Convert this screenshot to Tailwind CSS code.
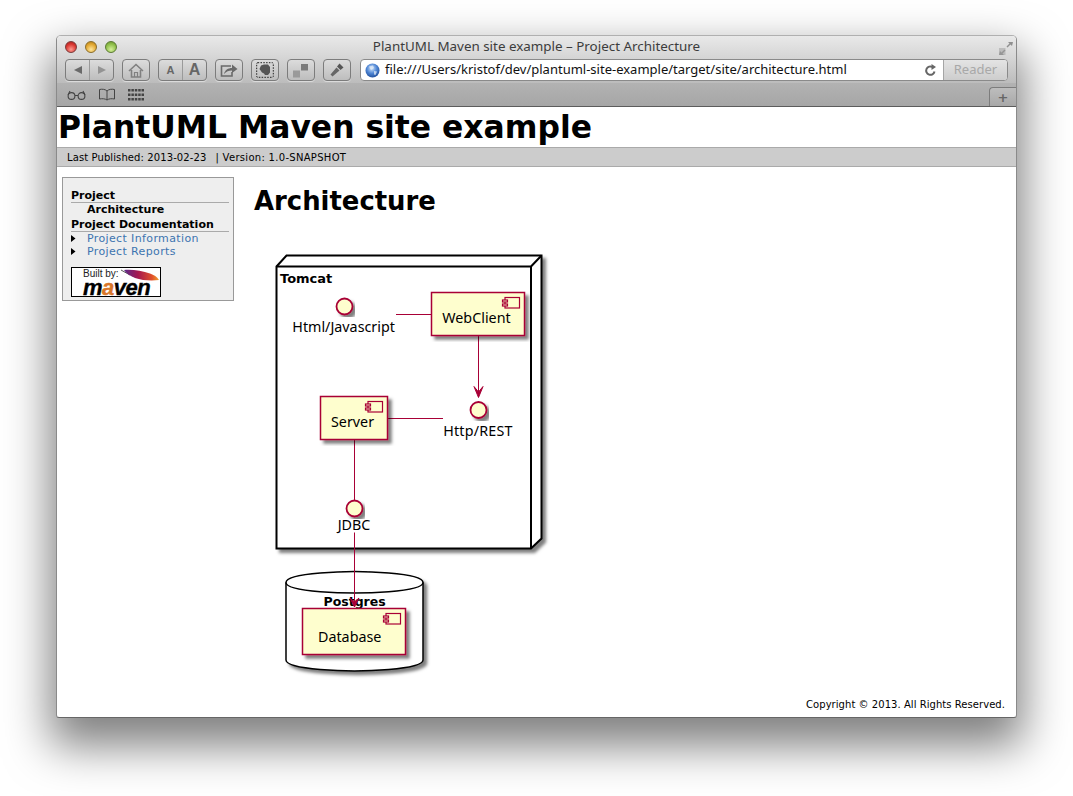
<!DOCTYPE html>
<html lang="en">
<head>
<meta charset="utf-8" />
<title>PlantUML Maven site example - Project Architecture</title>
<script src="https://cdn.jsdelivr.net/npm/@tailwindcss/browser@4"></script>
</head>
<body class="bg-white h-[796px] overflow-hidden font-['DejaVu_Sans',sans-serif]">
<div class="ml-[56px] mt-[35px] w-[961px] h-[683px] flex flex-col border border-[#8a8a8a] border-t-[#b0b0b0] border-b-[#666] rounded-t-[5px] rounded-b-[3px] overflow-hidden bg-white shadow-[0_22px_45px_6px_rgba(0,0,0,0.5)]">

  <!-- Title bar -->
  <div class="h-[21px] flex items-center relative bg-linear-to-b from-[#e9e9e9] to-[#d6d6d6]">
    <div class="flex gap-[8px] ml-[8px]">
      <span class="w-[12px] h-[12px] rounded-full border border-[#7a3a3a] bg-[radial-gradient(circle_at_50%_75%,#ff9a90,#d8352f_60%,#a02020)]"></span>
      <span class="w-[12px] h-[12px] rounded-full border border-[#8a6d2a] bg-[radial-gradient(circle_at_50%_75%,#ffe69a,#e0a52f_60%,#a87a18)]"></span>
      <span class="w-[12px] h-[12px] rounded-full border border-[#5b7a33] bg-[radial-gradient(circle_at_50%_75%,#d5f09a,#8fbf4a_60%,#66902c)]"></span>
    </div>
    <div class="absolute left-0 right-0 text-center text-[13.4px] text-[#3c3c3c] font-['Noto_Sans',sans-serif]">PlantUML Maven site example – Project Architecture</div>
    <svg class="ml-auto mr-[3px] mt-[3px]" width="15" height="15" viewBox="0 0 15 15">
      <path d="M15 1H10L11.5 2.5L8.5 5.5L9.5 6.5L12.5 3.5L14 5Z" fill="#8f8f8f"/>
      <path d="M1 14H6L4.5 12.5L7.5 9.5L6.5 8.5L3.5 11.5L2 10Z" fill="#8f8f8f"/>
      <path d="M1 7H7.5V14H1Z" fill="#9c9c9c" opacity=".5"/>
    </svg>
  </div>

  <!-- Toolbar -->
  <div class="h-[26px] flex items-center pl-[8px] bg-linear-to-b from-[#d6d6d6] to-[#bcbcbc]">
    <div class="w-[49px] h-[22px] flex rounded-[4px] border border-[#7c7c7c] bg-linear-to-b from-[#dcdcdc] to-[#bdbdbd] shadow-[0_1px_0_rgba(255,255,255,0.45)]">
      <div class="flex-1 flex items-center justify-center border-r border-[#9a9a9a]">
        <svg width="10" height="10" viewBox="0 0 10 10"><path d="M9 1V9L1 5Z" fill="#6a6a6a"/></svg>
      </div>
      <div class="flex-1 flex items-center justify-center">
        <svg width="10" height="10" viewBox="0 0 10 10"><path d="M1 1V9L9 5Z" fill="#939393"/></svg>
      </div>
    </div>
    <div class="ml-[8px] w-[28px] h-[22px] flex items-center justify-center rounded-[4px] border border-[#7c7c7c] bg-linear-to-b from-[#dcdcdc] to-[#bdbdbd] shadow-[0_1px_0_rgba(255,255,255,0.45)]">
      <svg width="16" height="15" viewBox="0 0 16 15"><path d="M1 8L8 1.5L15 8M3.5 7V14H12.5V7" fill="none" stroke="#808080" stroke-width="1.6"/><path d="M6.5 14V9.5H9.5V14" fill="none" stroke="#808080" stroke-width="1.2"/></svg>
    </div>
    <div class="ml-[8px] w-[49px] h-[22px] flex rounded-[4px] border border-[#7c7c7c] bg-linear-to-b from-[#dcdcdc] to-[#bdbdbd] shadow-[0_1px_0_rgba(255,255,255,0.45)] font-['Liberation_Sans',sans-serif] font-bold text-[#666]">
      <div class="w-[24px] flex items-center justify-center border-r border-[#9a9a9a] text-[11px]">A</div>
      <div class="flex-1 flex items-center justify-center text-[16px]">A</div>
    </div>
    <div class="ml-[8px] w-[28px] h-[22px] flex items-center justify-center rounded-[4px] border border-[#7c7c7c] bg-linear-to-b from-[#dcdcdc] to-[#bdbdbd] shadow-[0_1px_0_rgba(255,255,255,0.45)]">
      <svg width="18" height="14" viewBox="0 0 18 14"><path d="M11 3H1.5V13H12V9" fill="none" stroke="#6a6a6a" stroke-width="1.6"/><path d="M4 11C5 7 8 5 12 5V1.5L17.5 6L12 10V7.5C9 7.5 6 8.5 4 11Z" fill="#6a6a6a"/></svg>
    </div>
    <div class="ml-[8px] w-[28px] h-[22px] flex items-center justify-center rounded-[4px] border border-[#7c7c7c] bg-linear-to-b from-[#dcdcdc] to-[#bdbdbd] shadow-[0_1px_0_rgba(255,255,255,0.45)]">
      <svg width="18" height="16" viewBox="0 0 18 16"><rect x=".7" y=".7" width="16.6" height="14.6" rx="1" fill="none" stroke="#222" stroke-dasharray="1.5 1.3"/><path d="M5 3.5L8 2.5H12L14 5V10.5L12 13H9L8 11.5L6 10.5L3.5 7Z" fill="#555"/></svg>
    </div>
    <div class="ml-[8px] w-[28px] h-[22px] flex items-center justify-center rounded-[4px] border border-[#7c7c7c] bg-linear-to-b from-[#dcdcdc] to-[#bdbdbd] shadow-[0_1px_0_rgba(255,255,255,0.45)]">
      <svg width="18" height="15" viewBox="0 0 18 15"><rect x="1" y="7.5" width="7" height="7" fill="#9a9a9a"/><rect x="9" y="1" width="7" height="6.5" fill="#7a7a7a"/></svg>
    </div>
    <div class="ml-[8px] w-[28px] h-[22px] flex items-center justify-center rounded-[4px] border border-[#7c7c7c] bg-linear-to-b from-[#dcdcdc] to-[#bdbdbd] shadow-[0_1px_0_rgba(255,255,255,0.45)]">
      <svg width="16" height="16" viewBox="0 0 16 16"><path d="M1.5 12.5L7.5 5.5L10.5 8.5L3.5 14.5Z" fill="#666"/><path d="M8 4.5L10.5 1.5L14.5 5.5L11.5 8Z" fill="#555"/></svg>
    </div>
    <div class="ml-[9px] w-[648px] h-[22px] flex items-center rounded-[4px] border border-[#8a8a8a] bg-white overflow-hidden">
      <svg class="ml-[4px]" width="15" height="15" viewBox="0 0 15 15">
        <defs><radialGradient id="globe" cx="45%" cy="35%" r="65%"><stop offset="0" stop-color="#cfe3fb"/><stop offset=".55" stop-color="#4f86d4"/><stop offset="1" stop-color="#23519e"/></radialGradient></defs>
        <circle cx="7.5" cy="7.5" r="7" fill="url(#globe)"/>
        <path d="M4 3.5L8 2.5L9 5L6 7L5 5.5ZM9 8L12 8.5L10.5 12L9 11.5Z" fill="#e4ecf6" opacity=".75"/>
      </svg>
      <span class="ml-[5px] text-[13px] text-[#111] font-['Noto_Sans',sans-serif] whitespace-nowrap">file:///Users/kristof/dev/plantuml-site-example/target/site/architecture.html</span>
      <svg class="ml-auto mr-[6px]" width="13" height="13" viewBox="0 0 13 13"><path d="M10.5 7.5A4.2 4.2 0 1 1 8.5 3" fill="none" stroke="#666" stroke-width="2"/><path d="M7.5 0L12 3L7.5 6Z" fill="#666"/></svg>
      <div class="w-[64px] h-full flex items-center justify-center border-l border-[#a5a5a5] bg-linear-to-b from-[#e4e4e4] to-[#cdcdcd] text-[13px] text-[#a8a8a8] font-['Noto_Sans',sans-serif]">Reader</div>
    </div>
  </div>

  <!-- Bookmarks bar -->
  <div class="h-[24px] flex items-center pl-[10px] relative bg-linear-to-b from-[#b2b2b2] to-[#a6a6a6] border-b border-[#5c5c5c]">
    <svg width="19" height="10" viewBox="0 0 19 10"><circle cx="4.5" cy="6" r="3.4" fill="none" stroke="#444" stroke-width="1.1"/><circle cx="14.5" cy="6" r="3.4" fill="none" stroke="#444" stroke-width="1.1"/><path d="M8 5.5H11M1 5L3 1M18 5L16 1" fill="none" stroke="#444" stroke-width="1.1"/></svg>
    <svg class="ml-[12px]" width="18" height="13" viewBox="0 0 18 13"><path d="M9 3C7 1 4 1 1.5 1.5V11C4 10.5 7 10.5 9 12C11 10.5 14 10.5 16.5 11V1.5C14 1 11 1 9 3ZM9 3V12" fill="none" stroke="#444" stroke-width="1"/></svg>
    <svg class="ml-[12px]" width="16" height="12" viewBox="0 0 16 12" fill="#444">
      <path d="M0 0h2.5v2.5H0zM3.4 0h2.5v2.5H3.4zM6.8 0h2.5v2.5H6.8zM10.2 0h2.5v2.5h-2.5zM13.5 0h2.5v2.5h-2.5zM0 4.5h2.5V7H0zM3.4 4.5h2.5V7H3.4zM6.8 4.5h2.5V7H6.8zM10.2 4.5h2.5V7h-2.5zM13.5 4.5h2.5V7h-2.5zM0 9h2.5v2.5H0zM3.4 9h2.5v2.5H3.4zM6.8 9h2.5v2.5H6.8zM10.2 9h2.5v2.5h-2.5zM13.5 9h2.5v2.5h-2.5z"/>
    </svg>
    <div class="absolute right-0 bottom-0 w-[27px] h-[19px] flex items-center justify-center rounded-tl-[4px] border-l border-t border-[#7c7c7c] bg-linear-to-b from-[#bdbdbd] to-[#a8a8a8] text-[13px] leading-none font-bold text-[#666]">+</div>
  </div>

  <!-- Site header -->
  <div class="h-[41px] flex items-center border-b border-[#aaa] bg-white">
    <h1 class="ml-px text-[31.4px] leading-[40px] font-bold text-black whitespace-nowrap">PlantUML Maven site example</h1>
  </div>
  <div class="h-[19px] flex items-center pl-[10px] bg-[#ccc] border-b border-[#aaa] text-[10px] text-black whitespace-nowrap">
    <span class="tracking-[0.1px]">Last Published: 2013-02-23</span>
    <span class="ml-[9px] tracking-[0.3px]">| Version: 1.0-SNAPSHOT</span>
  </div>

  <!-- Page body -->
  <div class="flex-1 flex min-h-0">
    <aside class="ml-[5px] mt-[10px] w-[172px] h-[124px] shrink-0 border border-[#999] bg-[#eee] pl-[8px] pr-[4px] pt-[11px] text-[11px] leading-[13px]">
      <div class="font-bold text-black border-b border-[#aaa]">Project</div>
      <div class="pl-[16px] font-bold text-black">Architecture</div>
      <div class="mt-[2px] font-bold text-black border-b border-[#aaa]">Project Documentation</div>
      <div class="flex items-center text-[#3d74b0] tracking-[0.37px]">
        <svg width="16" height="13" viewBox="0 0 16 13"><path d="M0 3V10L4.5 6.5Z" fill="#000"/></svg>
        <span>Project Information</span>
      </div>
      <div class="flex items-center text-[#3d74b0] tracking-[0.37px]">
        <svg width="16" height="13" viewBox="0 0 16 13"><path d="M0 3V10L4.5 6.5Z" fill="#000"/></svg>
        <span>Project Reports</span>
      </div>
      <!-- Built by maven badge -->
      <div class="relative mt-[9px] w-[90px] h-[30px] border border-black bg-white overflow-hidden">
        <span class="absolute left-[11px] top-[1px] text-[10px] leading-[10px] text-[#222] font-['Liberation_Sans',sans-serif]">Built by:</span>
        <span class="absolute left-[11px] top-[11px] text-[22px] leading-[17px] tracking-[-0.5px] italic font-bold text-black [-webkit-text-stroke:0.4px] font-['Liberation_Sans',sans-serif]">m<span class="text-[#d9772a]">a</span>ven</span>
        <svg class="absolute left-[48px] top-[1px]" width="40" height="13" viewBox="0 0 40 13">
          <defs><linearGradient id="feather" x1="0" x2="1"><stop offset="0" stop-color="#5a2a8a"/><stop offset=".4" stop-color="#a5184f"/><stop offset=".8" stop-color="#e0502a"/><stop offset="1" stop-color="#f0a030"/></linearGradient></defs>
          <path d="M1 1L10 6" stroke="#555" stroke-width="1"/>
          <path d="M4 1C12 0 22 2 30 4.5C34 6 37 7.5 39 11C32 12 22 11.5 15 9C10 7 6 4 4 1Z" fill="url(#feather)"/>
        </svg>
      </div>
    </aside>

    <main class="ml-[20px] min-w-0">
      <h2 class="mt-[18px] text-[25.9px] leading-[32px] font-bold text-black">Architecture</h2>
      <!-- PlantUML diagram -->
      <svg class="mt-[28px] ml-[11px]" width="290" height="435" viewBox="0 0 290 435" font-family="'Noto Sans', sans-serif" font-size="14.3">
        <defs>
          <filter id="sh" x="-10%" y="-10%" width="125%" height="125%">
            <feDropShadow dx="3.5" dy="3.5" stdDeviation="1.8" flood-color="#000" flood-opacity=".5"/>
          </filter>
        </defs>

        <!-- Tomcat node -->
        <g filter="url(#sh)">
          <path d="M11.5 21.5L21.5 10.5H276.5V293.5L266 303.5H11.5Z" fill="#fff" stroke="#000" stroke-width="2"/>
        </g>
        <path d="M11.5 21.5H266V303.5M266 21.5L276.5 10.5" fill="none" stroke="#000" stroke-width="2"/>
        <text x="15" y="38" font-family="'DejaVu Sans', sans-serif" font-weight="700" font-size="13">Tomcat</text>

        <!-- Links -->
        <g stroke="#A80036" stroke-width="1" fill="none">
          <path d="M131 69.5H166.5"/>
          <path d="M213.5 90V152"/>
          <path d="M122.5 173.5H178"/>
          <path d="M89.5 194V255"/>
        </g>
        <path d="M209 141.5L213.5 152.5L218 141.5L213.5 147Z" fill="#A80036" stroke="#A80036"/>

        <!-- Html/Javascript interface -->
        <circle cx="79.5" cy="61.5" r="8" fill="#FEFECE" stroke="#A80036" stroke-width="1.8" filter="url(#sh)"/>
        <text x="27.3" y="87">Html/Javascript</text>

        <!-- WebClient -->
        <rect x="166.5" y="47.5" width="93" height="43" fill="#FEFECE" stroke="#A80036" stroke-width="1.5" filter="url(#sh)"/>
        <g fill="#FEFECE" stroke="#A80036" stroke-width="1.2">
          <rect x="240" y="52.5" width="14.5" height="10.5"/>
          <rect x="237.5" y="55" width="5" height="2"/>
          <rect x="237.5" y="59" width="5" height="2"/>
        </g>
        <text x="177.3" y="77.5">WebClient</text>

        <!-- Http/REST interface -->
        <circle cx="213.5" cy="165" r="8" fill="#FEFECE" stroke="#A80036" stroke-width="1.8" filter="url(#sh)"/>
        <text x="178.2" y="191" letter-spacing="0.2">Http/REST</text>

        <!-- Server -->
        <rect x="55.5" y="151.5" width="67" height="43" fill="#FEFECE" stroke="#A80036" stroke-width="1.5" filter="url(#sh)"/>
        <g fill="#FEFECE" stroke="#A80036" stroke-width="1.2">
          <rect x="103" y="156.5" width="14.5" height="10.5"/>
          <rect x="100.5" y="159" width="5" height="2"/>
          <rect x="100.5" y="163" width="5" height="2"/>
        </g>
        <text x="66" y="181.5">Server</text>

        <!-- JDBC interface -->
        <circle cx="89.5" cy="263.5" r="8" fill="#FEFECE" stroke="#A80036" stroke-width="1.8" filter="url(#sh)"/>
        <text x="72.7" y="285">JDBC</text>

        <!-- Postgres database -->
        <g filter="url(#sh)">
          <path d="M21 337.5C21 327 89.5 326.5 89.5 326.5C89.5 326.5 158 327 158 337.5V415C158 425.5 89.5 426 89.5 426C89.5 426 21 425.5 21 415Z" fill="#fff" stroke="#000" stroke-width="1.5"/>
        </g>
        <path d="M21 337.5C21 348 89.5 348 89.5 348C89.5 348 158 348 158 337.5" fill="none" stroke="#000" stroke-width="1.5"/>
        <text x="58.5" y="360.5" font-family="'DejaVu Sans', sans-serif" font-weight="700" font-size="12.5">Postgres</text>

        <!-- Database -->
        <rect x="37.5" y="363.5" width="103" height="46" fill="#FEFECE" stroke="#A80036" stroke-width="1.5" filter="url(#sh)"/>
        <g fill="#FEFECE" stroke="#A80036" stroke-width="1.2">
          <rect x="121" y="368.5" width="14.5" height="10.5"/>
          <rect x="118.5" y="371" width="5" height="2"/>
          <rect x="118.5" y="375" width="5" height="2"/>
        </g>
        <text x="53" y="396.5">Database</text>

        <!-- JDBC to Database -->
        <path d="M89.5 287.5V362" stroke="#A80036" stroke-width="1" fill="none"/>
        <path d="M85 353L89.5 362L94 353L89.5 357Z" fill="#A80036" stroke="#A80036"/>
      </svg>
    </main>
  </div>

  <footer class="pr-[11px] pb-[5px] text-right text-[10px] leading-[14px] tracking-[0.05px] text-black">Copyright © 2013. All Rights Reserved.</footer>
</div>
</body>
</html>
